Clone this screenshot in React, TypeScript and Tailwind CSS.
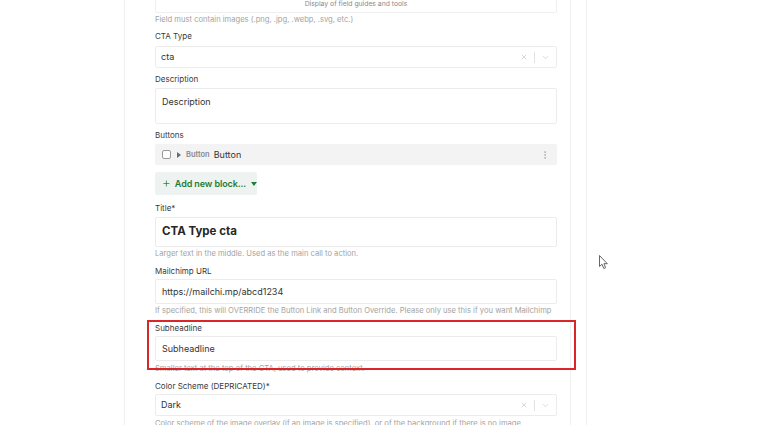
import { ChevronDown, X, Plus, EllipsisVertical } from 'lucide-react';

function Label({ text, className = '' }: { text: string; className?: string }) {
  return <div className={`h-[12px] text-[8px] leading-[12px] text-[#3a3a3a] ${className}`}>{text}</div>;
}

function Help({ text, className = '' }: { text: string; className?: string }) {
  return <div className={`h-[12px] whitespace-nowrap text-[7.6px] leading-[12px] text-[#a3a3a3] ${className}`}>{text}</div>;
}

function Select({ value, className = '' }: { value: string; className?: string }) {
  return (
    <div className={`flex h-[22px] items-center rounded-[2px] border border-[#ececec] pl-[5px] pr-[6px] ${className}`}>
      <span className="flex-1 text-[9px] text-[#333]">{value}</span>
      <X size={8} strokeWidth={2.5} className="text-[#d0d0d0]" />
      <div className="mx-[6px] h-[11px] w-px bg-[#e2e2e2]" />
      <ChevronDown size={9} strokeWidth={2} className="text-[#cfcfcf]" />
    </div>
  );
}

function Input({ value, className = '' }: { value: string; className?: string }) {
  return (
    <div className={`flex h-[25px] items-center rounded-[2px] border border-[#ececec] pl-[6px] ${className}`}>
      <span className="text-[9px] text-[#333]">{value}</span>
    </div>
  );
}

export default function App() {
  return (
    <div className="relative h-[425px] w-[768px] overflow-hidden bg-white" style={{ fontFamily: 'Inter, "Noto Sans", sans-serif' }}>
      <div className="flex h-full">
        <div className="w-[124px] shrink-0" />
        <div className="h-full w-[447px] shrink-0 border-x border-[#f0f0f0] pl-[30px] pr-[13px]">
          <div className="mt-[-28px] flex h-[41px] items-end justify-center rounded-[2px] border border-[#efefef] pb-[3px] text-[6.8px] text-[#8a8a8a]">
            Display of field guides and tools
          </div>
          <Help text="Field must contain images (.png, .jpg, .webp, .svg, etc.)" className="mt-[1px]" />
          <Label text="CTA Type" className="mt-[4px]" />
          <Select value="cta" className="mt-[4px]" />
          <Label text="Description" className="mt-[5px]" />
          <div className="mt-[3px] h-[36px] rounded-[2px] border border-[#ececec] pl-[6px] pt-[6px] text-[9px] text-[#333]">Description</div>
          <Label text="Buttons" className="mt-[5px]" />
          <div className="mt-[3px] flex h-[21px] items-center rounded-[2px] bg-[#f3f3f3] pl-[7px] pr-[7px]">
            <div className="h-[9px] w-[9px] rounded-[2px] border border-[#9a9a9a] bg-white" />
            <svg width="4" height="6" viewBox="0 0 4 6" className="ml-[6px]"><path d="M0 0 L4 3 L0 6 Z" fill="#6b6b6b" /></svg>
            <span className="ml-[5px] text-[7.5px] font-semibold text-[#8a8a8a]">Button</span>
            <span className="ml-[4px] flex-1 text-[9px] text-[#333]">Button</span>
            <EllipsisVertical size={10} strokeWidth={2} className="text-[#aaa]" />
          </div>
          <div className="mt-[7px] flex h-[23px] w-[102px] items-center whitespace-nowrap rounded-[2px] bg-[#eef2f0] pl-[7px] text-[#1f7c37]">
            <Plus size={9} strokeWidth={2} />
            <span className="ml-[4px] text-[9px] font-semibold tracking-[-0.1px]">Add new block...</span>
            <svg width="6" height="4" viewBox="0 0 6 4" className="ml-[5px]"><path d="M0 0 L6 0 L3 4 Z" fill="#1f7c37" /></svg>
          </div>
          <Label text="Title*" className="mt-[7px]" />
          <div className="mt-[3px] flex h-[30px] items-center rounded-[2px] border border-[#ececec] pl-[6px]">
            <span className="text-[11.5px] font-bold text-[#262626]">CTA Type cta</span>
          </div>
          <Help text="Larger text in the middle. Used as the main call to action." className="mt-[1px]" />
          <Label text="Mailchimp URL" className="mt-[5px]" />
          <Input value="https://mailchi.mp/abcd1234" className="mt-[2px]" />
          <Help text="If specified, this will OVERRIDE the Button Link and Button Override. Please only use this if you want Mailchimp" className="mt-[1px]" />
          <Label text="Subheadline" className="mt-[5px]" />
          <Input value="Subheadline" className="mt-[2px]" />
          <Help text="Smaller text at the top of the CTA, used to provide context." className="mt-[2px]" />
          <Label text="Color Scheme (DEPRICATED)*" className="mt-[5px]" />
          <Select value="Dark" className="mt-[2px]" />
          <Help text="Color scheme of the image overlay (if an image is specified), or of the background if there is no image." className="mt-[2px]" />
        </div>
        <div className="ml-[15px] h-full w-px bg-[#f0f0f0]" />
      </div>
      <div className="absolute left-[147px] top-[320px] h-[50px] w-[429px] border-2 border-[#d9262a]" />
      <svg width="10" height="15" viewBox="0 0 10 15" className="absolute left-[599px] top-[255px]">
        <path d="M0.5 0.5 L0.5 11.5 L3 9.3 L4.8 13.5 L6.6 12.7 L4.9 8.7 L8.3 8.7 Z" fill="#fff" stroke="#555" strokeWidth="0.9" strokeLinejoin="round" />
      </svg>
    </div>
  );
}
